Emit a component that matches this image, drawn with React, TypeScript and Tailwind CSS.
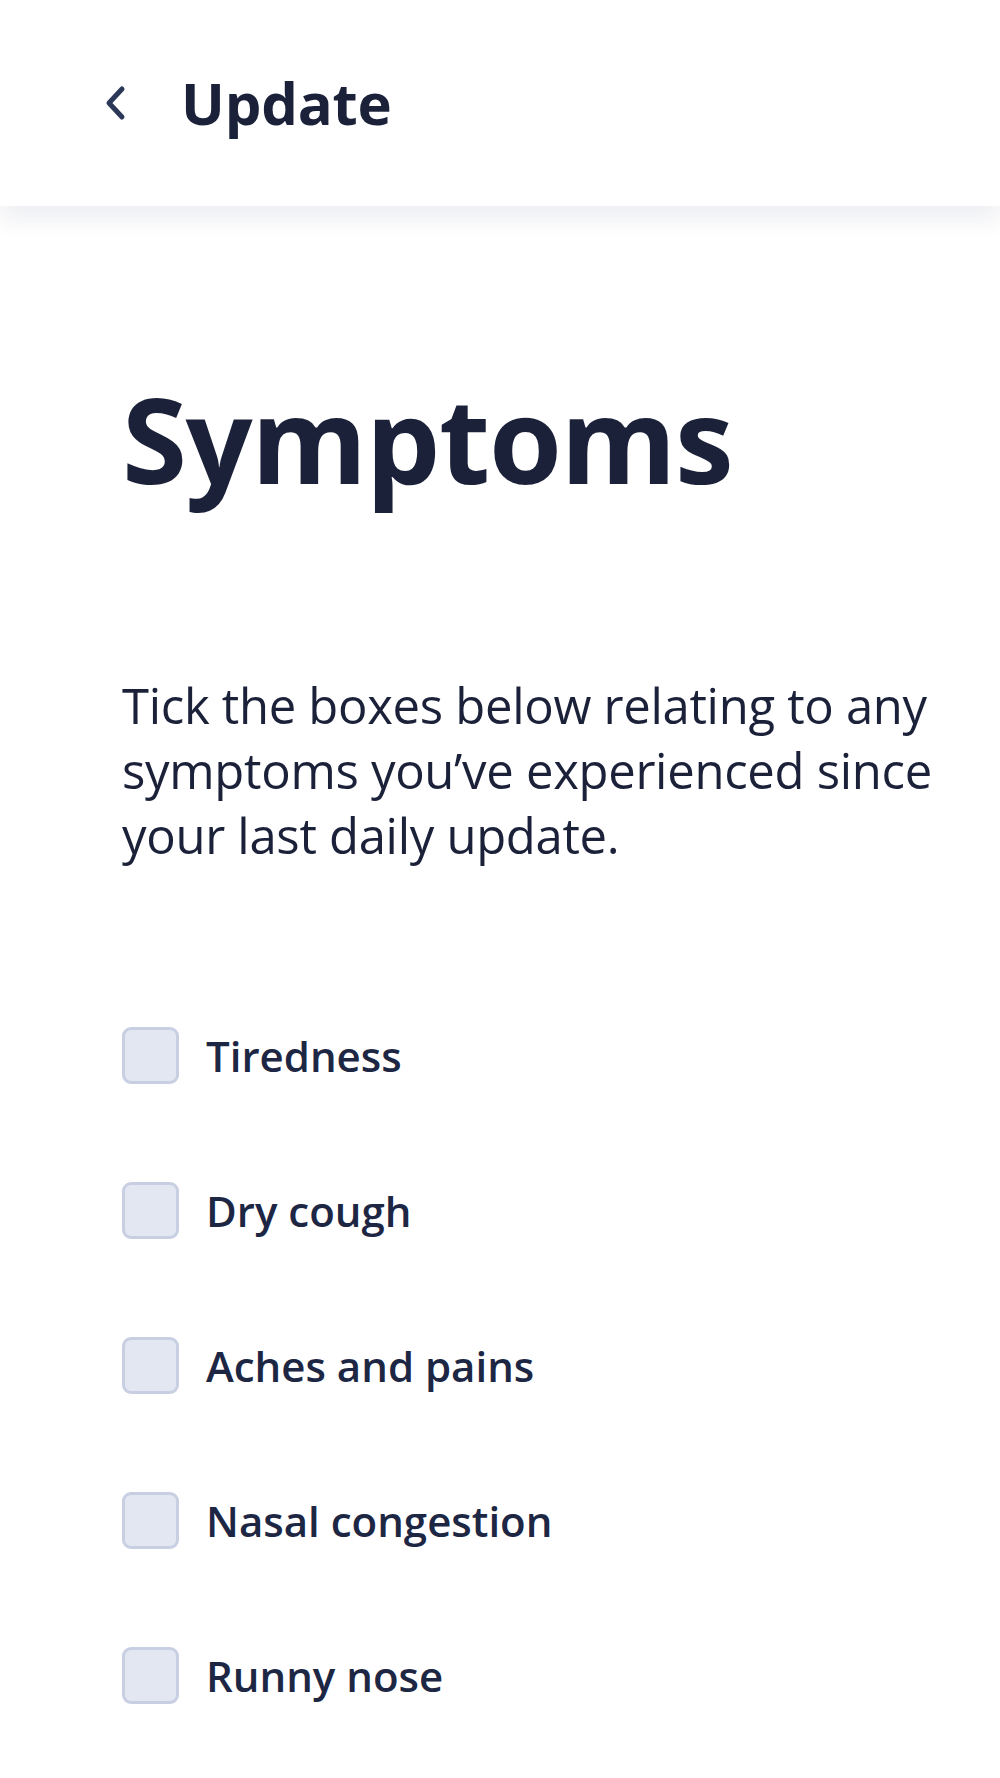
import React from "react";

const items = ["Tiredness", "Dry cough", "Aches and pains", "Nasal congestion", "Runny nose"];

export default function App() {
  return (
    <div className="min-h-[1778px] bg-white text-[#1b2139]" style={{ fontFamily: '"Open Sans", "Noto Sans", sans-serif' }}>
      <header className="relative z-10 flex h-[206px] items-center bg-white shadow-[0_14px_22px_rgba(20,30,70,0.07)]">
        <div className="ml-[103px] flex w-[24px] items-center">
          <svg width="24" height="36" viewBox="0 0 24 36" fill="none">
            <path d="M19 4 L6 18 L19 32" stroke="#2b3858" strokeWidth="5" strokeLinecap="round" strokeLinejoin="round" />
          </svg>
        </div>
        <h1 className="ml-[54px] text-[58px] font-bold leading-none tracking-[-0.2px]">Update</h1>
      </header>
      <main className="pl-[122px] pr-[40px]">
        <h2 className="mt-[174px] text-[118px] font-bold leading-none tracking-[-1.4px]">Symptoms</h2>
        <p className="mt-[175px] text-[49px] leading-[65px] tracking-[-0.3px]">
          Tick the boxes below relating to any symptoms you’ve experienced since your last daily update.
        </p>
        <ul className="mt-[110px]">
          {items.map((t) => (
            <li key={t} className="flex h-[155px] items-center gap-[27px]">
              <span className="h-[57px] w-[57px] shrink-0 rounded-[9px] border-[3px] border-[#c9cfe2] bg-[#e3e7f2]" />
              <span className="text-[42px] font-semibold leading-none text-[#1d2744]">{t}</span>
            </li>
          ))}
        </ul>
      </main>
    </div>
  );
}
